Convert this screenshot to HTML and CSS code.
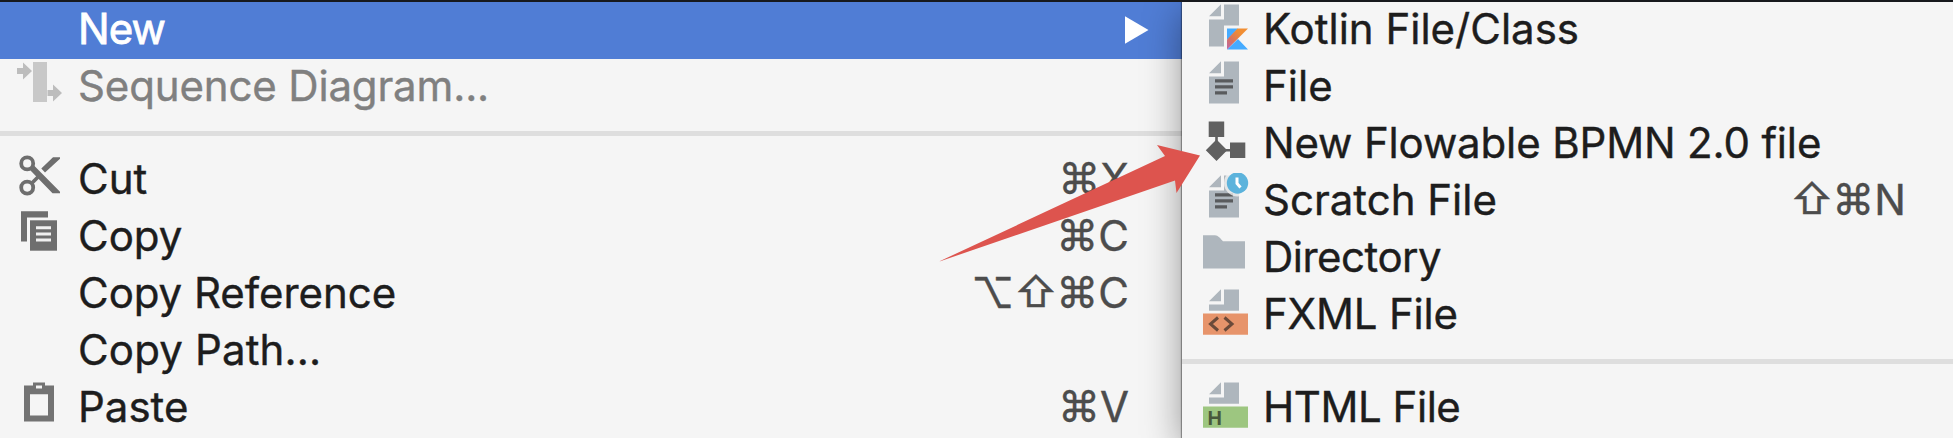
FILE: index.html
```html
<!DOCTYPE html>
<html lang="en">
<head>
<meta charset="utf-8">
<title>Context menu</title>
<link rel="stylesheet" href="styles.css">
</head>
<body>
<div class="screen">
  <div class="menu menu-main">
    <div class="item selected">
      <span class="icon"></span><span class="label label-new">New</span>
      <svg class="chevron" width="24" height="28" viewBox="0 0 24 28"><path d="M0 0.3L23.5 14L0 27.7Z" fill="#fff"/></svg>
    </div>
    <div class="item disabled">
      <svg class="icon" viewBox="0 0 78 57"><path d="M33 3h14v40H33z" fill="#c8c8c8"/><path d="M17 9h6V3.500L32 12L23 20.500V15H17zM47.500 31H53V25.500L62 34L53 42.500V37H47.500z" fill="#bdbdbd"/></svg>
      <span class="label label-seq">Sequence Diagram...</span>
    </div>
    <div class="separator"></div>
    <div class="item">
      <svg class="icon" viewBox="0 0 78 57"><g fill="none" stroke="#6e6e6e" stroke-width="3.800"><circle cx="27.200" cy="11.400" r="6"/><circle cx="27.200" cy="35.600" r="6"/><path d="M31.500 31.500L38 25"/></g><path d="M33.500 13L60 39.700V41.200H52.500L30.500 18.500ZM60 5.300H53L41.300 16.500L45 20.500L60 6.800Z" fill="#6e6e6e"/></svg>
      <span class="label">Cut</span><span class="keys"><span class="command">⌘</span>X</span>
    </div>
    <div class="item">
      <svg class="icon" viewBox="0 0 78 57"><path d="M21 2.300H48V8.500H27V32.500H21Z" fill="#6e6e6e"/><path d="M30 11.300H57V41.700H30Z" fill="#6e6e6e"/><path d="M36 17.300h15v2.900H36zM36 23.500h15v2.900H36zM36 29.600h15v2.900H36z" fill="#f0f0f0"/></svg>
      <span class="label">Copy</span><span class="keys"><span class="command">⌘</span>C</span>
    </div>
    <div class="item"><span class="icon"></span><span class="label label-ref">Copy Reference</span><span class="keys">⌥<span class="shift">⇧</span><span class="command">⌘</span>C</span></div>
    <div class="item"><span class="icon"></span><span class="label label-path">Copy Path...</span></div>
    <div class="item">
      <svg class="icon" viewBox="0 0 78 57"><path fill-rule="evenodd" d="M24 5.500H33V2.500H45V5.500H54V41.500H24ZM30 14.300V35.500H48V14.300ZM36 5.500V8.500H42V5.500Z" fill="#737373"/></svg>
      <span class="label">Paste</span><span class="keys"><span class="command">⌘</span>V</span>
    </div>
  </div>

  <div class="menu menu-sub">
    <div class="item">
      <svg class="icon" viewBox="0 0 81 57"><defs><linearGradient id="kotlin" x1="1" y1="0" x2="0" y2="1"><stop offset="0.300" stop-color="#f18e33"/><stop offset="0.650" stop-color="#d9735a"/><stop offset="1" stop-color="#b866b0"/></linearGradient></defs><path d="M27 14.300L39 2.300V14.300ZM27 17.500H42V2.500H57V23.500H42V44.500H27Z" fill="#aeb6bd"/><path d="M45 26.500H56L45 38ZM45 47.500L56 37L66 47.500Z" fill="#45abff"/><path d="M55.500 26.500H66L45 47.500V37.500Z" fill="url(#kotlin)"/></svg>
      <span class="label">Kotlin File/Class</span>
    </div>
    <div class="item">
      <svg class="icon" viewBox="0 0 81 57"><path d="M27 14.300L39 2.300V14.300ZM27 17.500H42V2.500H57V44.500H27Z" fill="#aeb6bd"/><path d="M33 20.300h18v3.300H33zM33 26.300h18v3.300H33zM33 32.300h12v3.300H33z" fill="#595b5d"/></svg>
      <span class="label">File</span>
    </div>
    <div class="item">
      <svg class="icon" viewBox="0 0 81 57"><path d="M26.700 5.500H42.200V21H26.700ZM48 26.500H63.300V42H48ZM34.500 23.500L45.200 34.200L34.500 44.900L23.800 34.200Z" fill="#606060"/><path d="M34.500 20V26M43 34.200H49" stroke="#606060" stroke-width="2.600"/></svg>
      <span class="label label-flow">New Flowable BPMN 2.0 file</span>
    </div>
    <div class="item">
      <svg class="icon" viewBox="0 0 81 57"><path d="M27 14.300L39 2.300V14.300ZM27 17.500H42V2.500H57V44.500H27Z" fill="#aeb6bd"/><path d="M33 20.300h18v3.300H33zM33 26.300h18v3.300H33zM33 32.300h12v3.300H33z" fill="#595b5d"/><circle cx="55.500" cy="10" r="13.500" fill="#f5f5f5" opacity="0.750"/><circle cx="55.500" cy="10" r="10.700" fill="#5cb3dc"/><path d="M55 4.500V10.500L58.500 14.500" fill="none" stroke="#fff" stroke-width="3"/></svg>
      <span class="label">Scratch File</span><span class="keys"><span class="shift">⇧</span><span class="command">⌘</span>N</span>
    </div>
    <div class="item">
      <svg class="icon" viewBox="0 0 81 57"><path d="M21 5.300H33C36 5.300 38.500 8.500 41 11.300H63V38.500H21Z" fill="#aeb6bd"/></svg>
      <span class="label label-dir">Directory</span>
    </div>
    <div class="item">
      <svg class="icon" viewBox="0 0 81 57"><path d="M27 14.300L39 2.300V14.300ZM27 17.500H42V2.500H57V23.700H27Z" fill="#aeb6bd"/><path d="M21 26.500H66V47.700H21Z" fill="#e7946b"/><path d="M36 30.500L28.500 37L36 43.500M42.500 30.500L50 37L42.500 43.500" fill="none" stroke="#6b4a3a" stroke-width="3"/></svg>
      <span class="label label-fxml">FXML File</span>
    </div>
    <div class="separator"></div>
    <div class="item">
      <svg class="icon" viewBox="0 0 81 57"><path d="M27 14.300L39 2.300V14.300ZM27 17.500H42V2.500H57V23.700H27Z" fill="#aeb6bd"/><path d="M21 26.500H66V47.700H21Z" fill="#9dc680"/><text class="badge" x="25.500" y="44.500">H</text></svg>
      <span class="label label-html">HTML File</span>
    </div>
  </div>

  <svg class="pointer" viewBox="0 0 262 118"><path d="M0 117L227 11L219 0L262 10.500L238.500 48L237 35.500Z" fill="#dd544e"/></svg>
</div>
</body>
</html>
```
FILE: styles.css
```css
* { box-sizing: border-box; }

body {
  margin: 0;
  background: #f5f5f5;
  font-family: Inter, "Liberation Sans", sans-serif;
  font-size: 42px;
  color: #1d1d1d;
}

.screen {
  position: relative;
  display: flex;
  width: 1953px;
  height: 438px;
  overflow: hidden;
  border-top: 2px solid #17191d;
}

.menu { background: #f5f5f5; }

.menu-main { width: 1182px; }

.menu-sub {
  position: relative;
  flex: 1;
  box-shadow: -1px 0 1px rgba(0, 0, 0, 0.35), 0 10px 36px rgba(0, 0, 0, 0.4);
}

.item {
  display: flex;
  height: 57px;
  line-height: 53px;
  white-space: pre;
  -webkit-text-stroke: 0.4px currentColor;
}

.menu-main .item { padding-right: 53px; }
.menu-sub .item { padding-right: 47px; }

.selected {
  background: #507dd5;
  color: #fff;
  -webkit-text-stroke-width: 0.8px;
}
.disabled { color: #808080; }

.icon { flex: none; height: 57px; }
.menu-main .icon { width: 78px; }
.menu-sub .icon { width: 81px; }

.label { flex: 1; }
.label-new { letter-spacing: -0.9px; }
.label-seq { letter-spacing: -0.15px; }
.label-ref { letter-spacing: -0.05px; }
.label-path { letter-spacing: 0.15px; }
.label-flow { letter-spacing: -0.15px; }
.label-dir { letter-spacing: -0.5px; }
.label-fxml { letter-spacing: -0.2px; }
.label-html { letter-spacing: -0.45px; }

.keys { color: #4c4c4c; }
.shift,
.command {
  display: inline-block;
  width: 42px;
  height: 53px;
  line-height: 51px;
  vertical-align: top;
}

.chevron { margin: 14px -20px 0 0; }

.separator {
  height: 36px;
  padding-top: 15px;
}
.separator::before {
  content: "";
  display: block;
  height: 5px;
  background: #dedede;
}

.badge {
  font: bold 20px "Liberation Sans", sans-serif;
  fill: #48593b;
  -webkit-text-stroke: 0;
}

.pointer {
  position: absolute;
  left: 938px;
  top: 143px;
  width: 262px;
  height: 118px;
}
```
